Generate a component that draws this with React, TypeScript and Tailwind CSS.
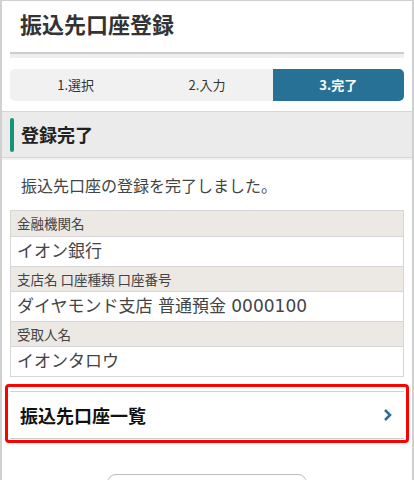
import React from "react";

const jp = { fontFamily: '"Noto Sans CJK JP", "Noto Sans", sans-serif' };
const val = { fontFamily: '"DejaVu Sans", "Noto Sans CJK JP", sans-serif' };

export default function App() {
  const rows: [string, string][] = [
    ["金融機関名", "イオン銀行"],
    ["支店名 口座種類 口座番号", "ダイヤモンド支店 普通預金 0000100"],
    ["受取人名", "イオンタロウ"],
  ];
  return (
    <div
      style={jp}
      className="w-[414px] h-[480px] overflow-hidden bg-white border-t border-x-2 border-[#d0d0d0] text-[#333]"
    >
      <div className="h-[51px] pl-[18px] pt-[7px]">
        <h1 className="text-[22px] font-bold leading-[30px] text-[#333]">振込先口座登録</h1>
      </div>
      <div className="mx-[8px]">
        <div className="h-[2px] bg-[#cccccc]" />
        <div className="h-[4px] bg-[#efefef]" />
      </div>
      <div className="mx-[8px] mt-[11px] h-[32px] flex rounded-[5px] bg-[#f1f1f1] overflow-hidden text-[13px] leading-[32px]">
        <div className="flex-1 text-center text-[#333]">1.選択</div>
        <div className="flex-1 text-center text-[#333]">2.入力</div>
        <div className="flex-1 text-center text-white font-bold bg-[#277196]">3.完了</div>
      </div>
      <div className="mt-[10px] h-[47px] border-y border-[#d6d6d6] bg-[#ebebeb] flex items-center">
        <div className="ml-[8px] w-[4px] h-[34px] rounded-full bg-[#15927a]" />
        <div className="ml-[7px] text-[18px] font-bold text-[#222]">登録完了</div>
      </div>
      <div className="h-[2px] bg-[#f2f2f2]" />
      <div className="h-[50px] pl-[19px] pt-[13px] text-[16px] leading-[24px] text-[#444]">
        振込先口座の登録を完了しました。
      </div>
      <div className="mx-[8px] border border-[#d6d6d6]">
        {rows.map(([label, value], i) => (
          <div key={i}>
            <div className={`h-[25px] bg-[#ece8e4] pl-[6px] text-[13.5px] leading-[25px] text-[#444] ${i > 0 ? "border-t border-[#d6d6d6]" : ""}`}>
              {label}
            </div>
            <div style={val} className="h-[30px] border-t border-[#d6d6d6] pl-[6px] text-[17px] leading-[29px] text-[#444]">
              {value}
            </div>
          </div>
        ))}
      </div>
      <div className="mx-[3px] mt-[7px] border-[3px] border-[#ff0000] rounded-[4px] px-[2px] pt-[4px] pb-[1px]">
        <div className="h-[48px] border-y border-[#d0d0d0] flex items-center justify-between pl-[10px] pr-[10px]">
          <span className="text-[18px] font-bold text-[#111]">振込先口座一覧</span>
          <svg width="10" height="14" viewBox="0 0 10 14" className="mr-[1px]">
            <path d="M2 2 L7 7 L2 12" fill="none" stroke="#2a6f9a" strokeWidth="2.6" />
          </svg>
        </div>
      </div>
      <div className="mt-[31px] mx-auto w-[200px] h-[20px] rounded-t-[9px] border border-[#bdbdbd]" />
    </div>
  );
}
